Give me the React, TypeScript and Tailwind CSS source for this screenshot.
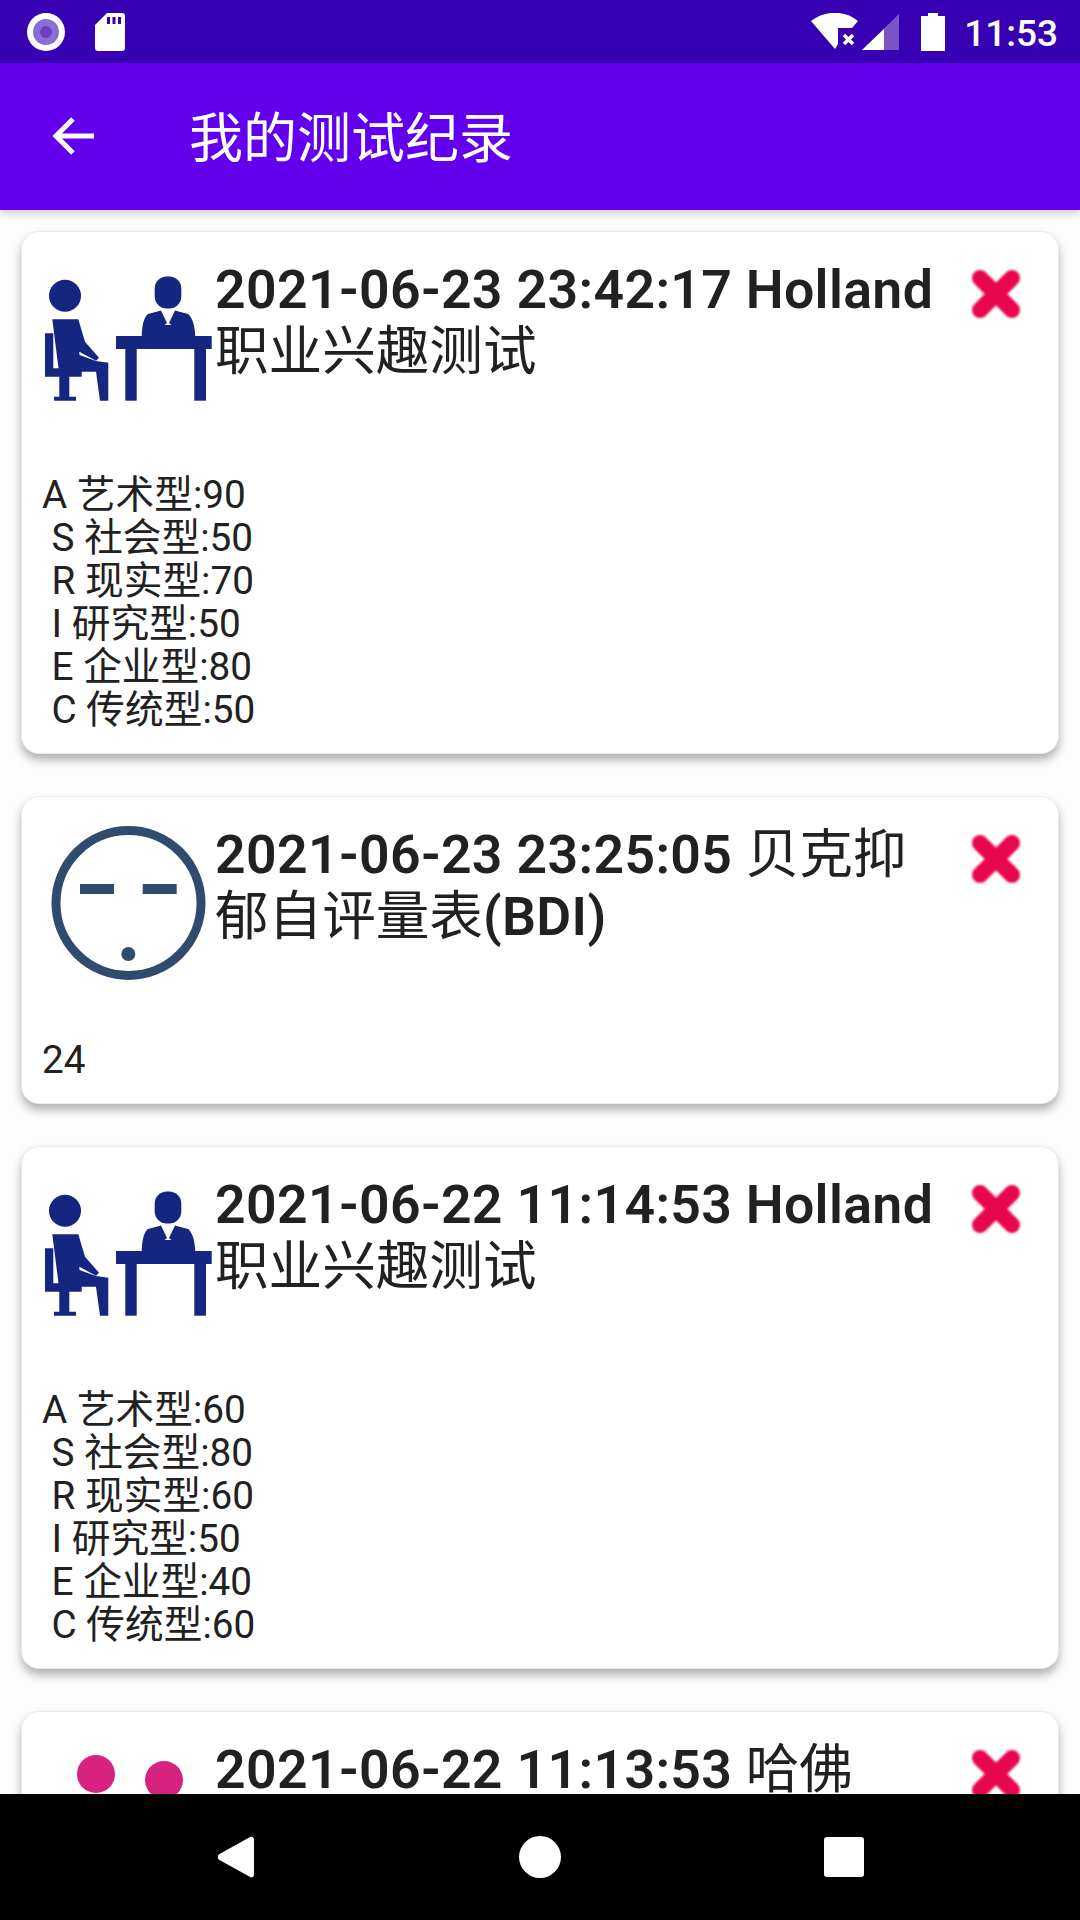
const bodyFont = "font-['Roboto','Noto_Sans_CJK_SC',sans-serif]";

const InterviewIcon = () => (
  <svg viewBox="0 0 172 172" className="w-[172px] h-[172px]" fill="#14267f">
    <circle cx="23" cy="44.7" r="16" />
    <path d="M10.3 68.3H36.3L43 90.7 57 106.7 54 109.7 37.3 100.7 37.500 104 54 110 66.3 111.7V149.7H58L54 120.7H39.7V125.7H27.3V145.7H34V149.7H12V145.7H17.3V125.700H3V82.3H11.3V117.3H16.5Z" />
    <rect x="112.7" y="25.500" width="26.600" height="32" rx="12" />
    <path d="M99.7 85.7C100 74 102 66 106 63L119 59.5 125 72 122.5 74H129.5L127 72 133 59.5 146 63C150 66 153 74 153.3 85.7Z" />
    <path d="M124 75H128.5L130 85H122.5Z" />
    <rect x="74" y="85" width="95.7" height="13" />
    <rect x="83.3" y="98" width="11.4" height="51.7" />
    <rect x="152.3" y="98" width="11.7" height="51.7" />
  </svg>
);

const FaceIcon = () => (
  <svg viewBox="0 0 172 172" className="w-[172px] h-[172px]" fill="#2f4b6e">
    <circle cx="86.500" cy="87" r="72.5" fill="none" stroke="#2f4b6e" strokeWidth="9" />
    <rect x="38" y="68" width="34" height="10" />
    <rect x="100.7" y="68" width="34" height="10" />
    <circle cx="86.3" cy="138" r="7" />
  </svg>
);

const DotsIcon = () => (
  <svg viewBox="0 0 172 172" className="w-[172px] h-[172px]" fill="#d6237f">
    <circle cx="54" cy="43" r="19" />
    <circle cx="122" cy="49" r="19" />
  </svg>
);

const DeleteMark = () => (
  <svg viewBox="0 0 50 50" className="w-[50px] h-[50px] mt-[18px] blur-[0.8px]">
    <path d="M9 9 41 41M41 9 9 41" stroke="#e8064f" strokeWidth="16" strokeLinecap="round" />
  </svg>
);

const StatusBar = () => (
  <div className="h-[63px] shrink-0 bg-[#3700b3] flex items-center text-white pl-[27px] pr-[22px]">
    <svg viewBox="0 0 38 38" className="w-[38px] h-[38px]">
      <circle cx="19" cy="19" r="19" fill="#fff" />
      <circle cx="19" cy="19" r="13" fill="#8a6fd0" />
      <circle cx="19" cy="19" r="6" fill="#6a3fc4" />
    </svg>
    <svg viewBox="0 0 30 38" className="w-[30px] h-[38px] ml-[30px]">
      <path d="M12 0H27A3 3 0 0 1 30 3V35A3 3 0 0 1 27 38H3A3 3 0 0 1 0 35V12Z" fill="#fff" />
      <path d="M12 4H15V11H12ZM17.500 4H20.500V11H17.500ZM23 4H26V11H23Z" fill="#3700b3" />
    </svg>
    <div className="flex-1" />
    <svg viewBox="0 0 48 38" className="w-[48px] h-[38px]">
      <path d="M0 8C14 -3 34 -3 47 8L41 15H27V31L24 36Z" fill="#fff" />
      <path d="M33 22 42 31M42 22 33 31" stroke="#fff" strokeWidth="3.500" />
    </svg>
    <svg viewBox="0 0 37 36" className="w-[37px] h-[36px] ml-[3px]">
      <path d="M37 0V36H0Z" fill="#7a55c8" />
      <path d="M22 15V36H0Z" fill="#fff" />
    </svg>
    <svg viewBox="0 0 24 38" className="w-[24px] h-[38px] ml-[22px]">
      <path d="M7 0H17V3H24V38H0V3H7Z" fill="#fff" />
    </svg>
    <span className={`ml-[19px] mt-[3px] text-[37px] font-medium leading-none ${bodyFont}`}>11:53</span>
  </div>
);

const AppBar = () => (
  <header className="relative z-10 h-[147px] shrink-0 bg-[#6200ee] flex items-center text-white shadow-[0_3px_8px_rgba(0,0,0,0.22)]">
    <svg viewBox="0 0 42 42" className="w-[42px] h-[42px] ml-[52px] -mt-[2px]" fill="none" stroke="#fff" strokeWidth="5">
      <path d="M43 21H4M21 4 4 21 21 38" />
    </svg>
    <h1 className={`ml-[95px] mt-[6px] text-[54px] font-normal leading-none ${bodyFont}`}>我的测试纪录</h1>
  </header>
);

const Latin = ({ children }: { children: React.ReactNode }) => (
  <b className="font-semibold tracking-[0.36px]">{children}</b>
);

type Record = {
  time: string;
  name: React.ReactNode;
  icon: React.ReactNode;
  lines: string[];
};

const records: Record[] = [
  {
    time: "2021-06-23 23:42:17",
    name: <><Latin>Holland</Latin> 职业兴趣测试</>,
    icon: <InterviewIcon />,
    lines: ["A 艺术型:90", " S 社会型:50", " R 现实型:70", " I 研究型:50", " E 企业型:80", " C 传统型:50"],
  },
  {
    time: "2021-06-23 23:25:05",
    name: <>贝克抑郁自评量表<Latin>(BDI)</Latin></>,
    icon: <FaceIcon />,
    lines: ["24"],
  },
  {
    time: "2021-06-22 11:14:53",
    name: <><Latin>Holland</Latin> 职业兴趣测试</>,
    icon: <InterviewIcon />,
    lines: ["A 艺术型:60", " S 社会型:80", " R 现实型:60", " I 研究型:50", " E 企业型:40", " C 传统型:60"],
  },
  {
    time: "2021-06-22 11:13:53",
    name: <>哈佛</>,
    icon: <DotsIcon />,
    lines: [],
  },
];

const RecordCard = ({ record }: { record: Record }) => (
  <article className="shrink-0 bg-white rounded-[18px] border border-[#ebebed] pl-[20px] pr-[20px] pt-[19px] pb-[22px] shadow-[0_6px_10px_rgba(0,0,0,0.3)]">
    <div className="flex h-[222px]">
      <div className="w-[173px] shrink-0">{record.icon}</div>
      <h2 className={`w-[725px] mt-[8px] text-[53.600px] leading-[62px] font-normal text-[#212121] ${bodyFont}`}>
        <Latin>{record.time}</Latin> {record.name}
      </h2>
      <div className="flex-1 flex justify-end pr-[17px]">
        <DeleteMark />
      </div>
    </div>
    {record.lines.map((line) => (
      <p key={line} className={`whitespace-pre text-[38.700px] leading-[43px] text-[#212121] ${bodyFont}`}>
        {line}
      </p>
    ))}
  </article>
);

const NavBar = () => (
  <nav className="h-[126px] shrink-0 bg-black relative z-10 flex items-center">
    <svg viewBox="0 0 36 42" className="w-[36px] h-[42px] ml-[218px]">
      <path d="M33 0.500A3 3 0 0 1 36 3V39A3 3 0 0 1 33 41.500L1.500 24A3.500 3.500 0 0 1 1.500 18Z" fill="#fff" />
    </svg>
    <div className="w-[42px] h-[42px] rounded-full bg-white ml-[265px]" />
    <div className="w-[40px] h-[40px] rounded-[3px] bg-white ml-[263px]" />
  </nav>
);

export default function App() {
  return (
    <div className="w-[1080px] h-[1920px] flex flex-col overflow-hidden bg-[#fdfdfe]">
      <StatusBar />
      <AppBar />
      <main className="flex-1 overflow-hidden flex flex-col gap-[42px] px-[21px] pt-[21px]">
        {records.map((r) => (
          <RecordCard key={r.time} record={r} />
        ))}
      </main>
      <NavBar />
    </div>
  );
}
